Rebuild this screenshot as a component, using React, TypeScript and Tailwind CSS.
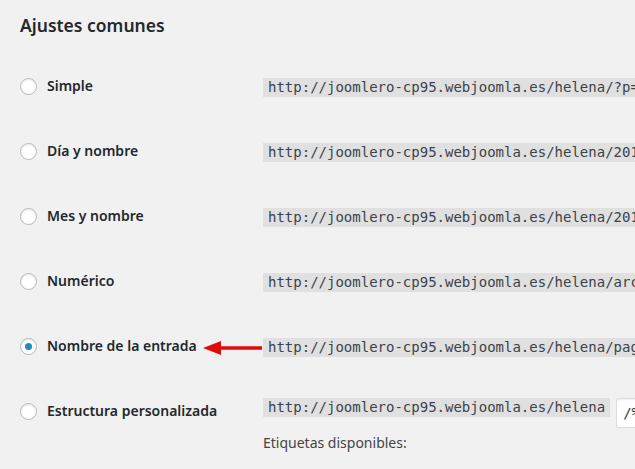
import React from "react";

const base = "http://joomlero-cp95.webjoomla.es/helena";

const options = [
  { label: "Simple", url: base + "/?p=123" },
  { label: "Día y nombre", url: base + "/2016/08/12/entrada-de-ejemplo/" },
  { label: "Mes y nombre", url: base + "/2016/08/entrada-de-ejemplo/" },
  { label: "Numérico", url: base + "/archivos/123" },
  { label: "Nombre de la entrada", url: base + "/pagina-de-ejemplo/", checked: true },
];

function Radio({ checked }: { checked?: boolean }) {
  return (
    <span className="flex h-[17px] w-[17px] shrink-0 items-center justify-center rounded-full border border-[#b4b9be] bg-white shadow-[inset_0_1px_2px_rgba(0,0,0,0.1)]">
      {checked && <span className="h-[7px] w-[7px] rounded-full bg-[#1e8cbe]" />}
    </span>
  );
}

function Code({ children }: { children: React.ReactNode }) {
  return (
    <code className="whitespace-nowrap bg-black/[0.07] px-[5px] pb-[1px] font-['DejaVu_Sans_Mono',monospace] text-[14px] leading-[18px] text-[#3c434a]">
      {children}
    </code>
  );
}

export default function App() {
  return (
    <div className="min-h-screen w-[635px] overflow-hidden bg-[#f1f1f1] px-5 pt-[13px] font-['Noto_Sans',sans-serif] text-[#23282d]">
      <h2 className="text-[17.5px] font-semibold leading-6">Ajustes comunes</h2>

      <div className="mt-[39px]">
        {options.map((o) => (
          <div key={o.label} className="relative flex h-[65px] items-start">
            <label className="flex w-[243px] shrink-0 items-center gap-[10px] text-[14px] font-semibold leading-5">
              <Radio checked={o.checked} />
              {o.label}
            </label>
            <div className="mt-[2px] flex">
              <Code>{o.url}</Code>
            </div>
            {o.checked && (
              <svg className="absolute left-[183px] top-[4px]" width="60" height="16" viewBox="0 0 60 16">
                <path d="M16 8H59" stroke="#e10a0a" strokeWidth="3.5" />
                <path d="M0 8L18 1V15Z" fill="#e10a0a" />
              </svg>
            )}
          </div>
        ))}

        {/* Custom structure */}
        <div className="flex items-start">
          <label className="flex w-[243px] shrink-0 items-center gap-[10px] text-[14px] font-semibold leading-5">
            <Radio />
            Estructura personalizada
          </label>
          <div>
            <div className="-mt-[3px] flex items-start gap-[6px]">
              <Code>{base}</Code>
              <input
                readOnly
                value="/%postname%/"
                className="h-[30px] w-[240px] rounded-[2px] border border-[#ddd] bg-white px-[6px] font-['DejaVu_Sans_Mono',monospace] text-[14px] text-[#32373c] shadow-[inset_0_1px_2px_rgba(0,0,0,0.07)] outline-none"
              />
            </div>
            <p className="mt-[5px] text-[14px] leading-5 text-[#444]">Etiquetas disponibles:</p>
          </div>
        </div>
      </div>
    </div>
  );
}
